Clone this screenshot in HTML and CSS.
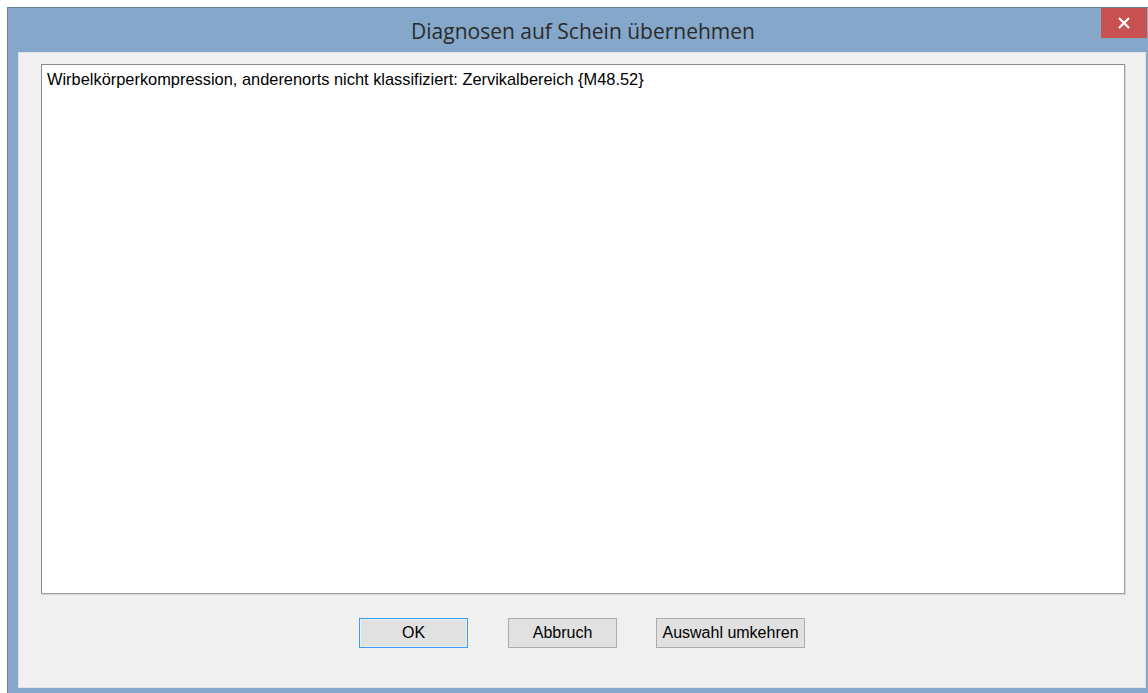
FILE: index.html
```html
<!DOCTYPE html>
<html lang="de">
<head>
<meta charset="utf-8">
<title>Diagnosen auf Schein übernehmen</title>
<link rel="stylesheet" href="styles.css">
</head>
<body>
<div class="window">
  <div class="titlebar">
    <div class="title">Diagnosen auf Schein übernehmen</div>
    <div class="close" aria-label="Schließen">
      <svg width="14" height="12" viewBox="0 0 14 12"><path d="M2 1 L12 11 M12 1 L2 11" stroke="#fff" stroke-width="2.2" fill="none"/></svg>
    </div>
  </div>
  <div class="client">
    <div class="listbox">
      <div class="item">Wirbelkörperkompression, anderenorts nicht klassifiziert: Zervikalbereich {M48.52}</div>
    </div>
    <div class="buttons">
      <button class="btn btn-default">OK</button>
      <button class="btn">Abbruch</button>
      <button class="btn btn-wide">Auswahl umkehren</button>
    </div>
  </div>
</div>
</body>
</html>
```
FILE: styles.css
```css
html, body {
  margin: 0;
  padding: 0;
  background: #ffffff;
  overflow: hidden;
  height: 693px;
}

.window {
  margin: 7px 0 0 7px;
  width: 1148px;
  height: 700px;
  border: 1px solid #6a84a0;
  background: #85a7c9;
  padding: 0 10px 0 10px;
  box-sizing: border-box;
  display: flex;
  flex-direction: column;
}

.titlebar {
  height: 44px;
  position: relative;
  display: flex;
  align-items: center;
  justify-content: center;
  flex: none;
}

.title {
  font-family: "Open Sans", "Noto Sans", sans-serif;
  font-size: 21px;
  color: #2b2b2b;
  margin-top: 1px;
  margin-left: 4px;
}

.close {
  position: absolute;
  top: 0;
  right: -3px;
  width: 46px;
  height: 30px;
  background: #c75050;
  display: flex;
  align-items: center;
  justify-content: center;
}

.client {
  width: 1128px;
  height: 636px;
  box-sizing: border-box;
  background: #f0f0f0;
  border: 1px solid #dfe3e8;
  padding: 11px 20px 0 22px;
  display: flex;
  flex-direction: column;
  flex: none;
}

.listbox {
  height: 530px;
  box-sizing: border-box;
  background: #ffffff;
  border: 1px solid #a0a0a0;
  border-top-color: #8c8c8c;
  border-left-color: #8c8c8c;
  box-shadow: 1px 1px 0 #d4d4d4;
  padding: 5px 5px;
}

.item {
  font-family: "Liberation Sans", Arial, sans-serif;
  font-size: 16.4px;
  line-height: 19px;
  color: #000;
  white-space: nowrap;
}

.buttons {
  display: flex;
  justify-content: center;
  gap: 39px;
  margin-top: 24px;
  padding-right: 2px;
}

.btn {
  width: 109px;
  height: 30px;
  box-sizing: border-box;
  border: 1px solid #adadad;
  background: #e1e1e1;
  font-family: "Liberation Sans", Arial, sans-serif;
  font-size: 16px;
  color: #000;
  padding: 0;
  margin: 0;
}

.btn-default {
  border: 1px solid #3c9af8;
  box-shadow: inset 0 0 0 1px #e5f1fb;
  margin-right: 1px;
}

.btn-wide {
  width: 149px;
}
```
